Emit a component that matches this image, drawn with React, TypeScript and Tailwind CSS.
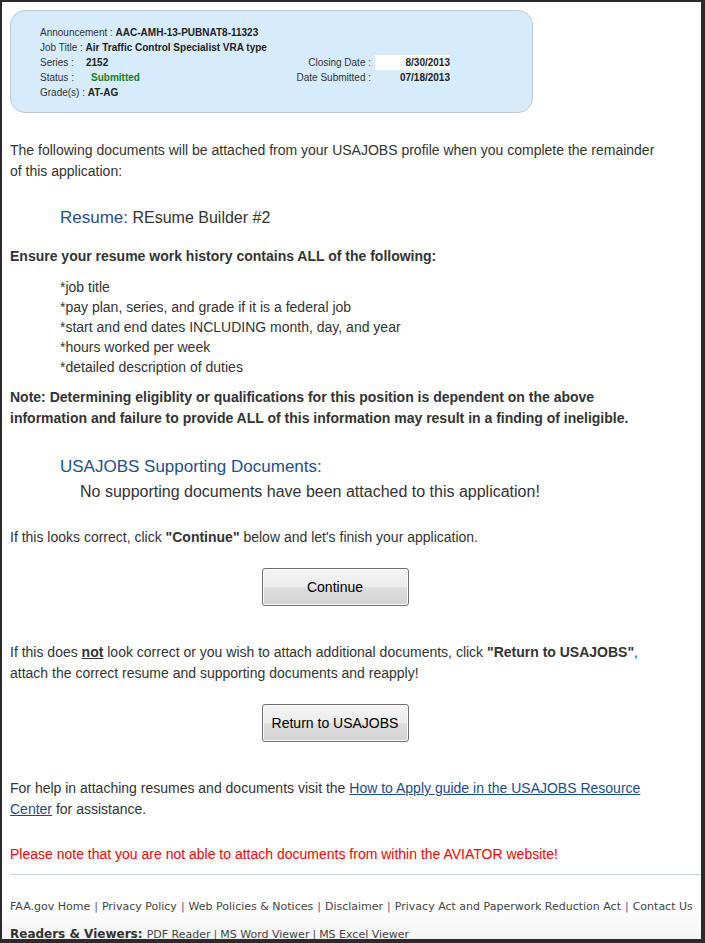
const INFO_LABEL = 'text-[#333333]';
const INFO_VALUE = 'font-bold text-[#222222]';

function InfoBox() {
  return (
    <div className="ml-2 mt-2 h-[103px] w-[523px] rounded-[15px] border border-[#bfc7cf] bg-[#d6ecfc] pl-[29px] pt-[14px] text-[10px] leading-[15px]">
      <div className="flex">
        <span className={INFO_LABEL}>Announcement :&nbsp;</span>
        <span className={INFO_VALUE}>AAC-AMH-13-PUBNAT8-11323</span>
      </div>
      <div className="flex">
        <span className={INFO_LABEL}>Job Title :&nbsp;</span>
        <span className={INFO_VALUE}>Air Traffic Control Specialist VRA type</span>
      </div>
      <div className="flex">
        <span className={`w-[46px] ${INFO_LABEL}`}>Series :</span>
        <span className={`w-[206px] ${INFO_VALUE}`}>2152</span>
        <span className={`w-[79px] text-right ${INFO_LABEL}`}>Closing Date :</span>
        <span className={`ml-1 w-[75px] bg-white text-right ${INFO_VALUE}`}>8/30/2013</span>
      </div>
      <div className="flex">
        <span className={`w-[51px] ${INFO_LABEL}`}>Status :</span>
        <span className="w-[201px] font-bold text-[#1e7a1e]">Submitted</span>
        <span className={`w-[79px] text-right ${INFO_LABEL}`}>Date Submitted :</span>
        <span className={`ml-1 w-[75px] text-right ${INFO_VALUE}`}>07/18/2013</span>
      </div>
      <div className="flex">
        <span className={INFO_LABEL}>Grade(s) :&nbsp;</span>
        <span className={INFO_VALUE}>AT-AG</span>
      </div>
    </div>
  );
}

function GrayButton({ label }: { label: string }) {
  return (
    <div className="flex justify-center">
      <button className="h-[38px] w-[147px] rounded-[3px] border border-[#707070] bg-[linear-gradient(to_bottom,#f4f4f4_0%,#ececec_48%,#dedede_52%,#d3d3d3_100%)] text-[14px] text-black shadow-[inset_0_0_0_1px_#fbfbfb]">
        {label}
      </button>
    </div>
  );
}

const FOOTER_LINKS = [
  'FAA.gov Home',
  'Privacy Policy',
  'Web Policies & Notices',
  'Disclaimer',
  'Privacy Act and Paperwork Reduction Act',
  'Contact Us',
];

const VIEWERS = ['PDF Reader', 'MS Word Viewer', 'MS Excel Viewer'];

function Footer() {
  return (
    <div className="mt-[24px] pl-2 text-[11px] leading-[16px] text-[#444444] [font-family:'DejaVu_Sans',Verdana,sans-serif]">
      <div className="whitespace-nowrap">
        {FOOTER_LINKS.map((link, i) => (
          <span key={link}>
            {i > 0 && <span className="px-[4px] text-[#6b4c7a]">|</span>}
            {link}
          </span>
        ))}
      </div>
      <div className="mt-[11px] whitespace-nowrap">
        <span className="text-[12px] font-bold text-[#333333]">Readers &amp; Viewers: </span>
        {VIEWERS.map((v, i) => (
          <span key={v}>
            {i > 0 && <span className="px-[3px] text-[#555555]">|</span>}
            {v}
          </span>
        ))}
      </div>
    </div>
  );
}

export default function App() {
  return (
    <div className="h-[943px] w-[705px] overflow-hidden border-b-4 border-l-2 border-r-4 border-t-2 border-[#2b2b2b] bg-[linear-gradient(to_bottom,#ffffff_0%,#ffffff_96%,#f4f4f4_100%)] [font-family:'Liberation_Sans',Arial,sans-serif]">
      <InfoBox />

      <div className="w-[658px] pl-2 text-[14px] text-[#333333]">
        <p className="mt-[27px] leading-[21px]">
          The following documents will be attached from your USAJOBS profile when you complete the remainder of this
          application:
        </p>

        <div className="mt-[24px] pl-[50px] leading-[24px]">
          <span className="text-[17px] text-[#1e4f8f]">Resume:</span>
          <span className="text-[16px] text-[#333333]"> REsume Builder #2</span>
        </div>

        <p className="mt-[16px] font-bold leading-[21px]">Ensure your resume work history contains ALL of the following:</p>

        <ul className="mt-[10px] pl-[50px] leading-[20px]">
          <li>*job title</li>
          <li>*pay plan, series, and grade if it is a federal job</li>
          <li>*start and end dates INCLUDING month, day, and year</li>
          <li>*hours worked per week</li>
          <li>*detailed description of duties</li>
        </ul>

        <p className="mt-[10px] font-bold leading-[21px]">
          Note: Determining eligiblity or qualifications for this position is dependent on the above information and
          failure to provide ALL of this information may result in a finding of ineligible.
        </p>

        <div className="mt-[26px] pl-[50px] text-[17px] leading-[24px] text-[#1e4f8f]">USAJOBS Supporting Documents:</div>
        <div className="mt-[2px] pl-[70px] text-[16px] leading-[22px]">No supporting documents have been attached to this application!</div>

        <p className="mt-[24px] leading-[21px]">
          If this looks correct, click <b>"Continue"</b> below and let's finish your application.
        </p>

        <div className="mt-[20px]">
          <GrayButton label="Continue" />
        </div>

        <p className="mt-[36px] leading-[21px]">
          If this does <b className="underline">not</b> look correct or you wish to attach additional documents, click{' '}
          <b>"Return to USAJOBS"</b>, attach the correct resume and supporting documents and reapply!
        </p>

        <div className="mt-[20px]">
          <GrayButton label="Return to USAJOBS" />
        </div>

        <p className="mt-[36px] leading-[21px]">
          For help in attaching resumes and documents visit the{' '}
          <a href="#" className="text-[#1a4c8e] underline">
            How to Apply guide in the USAJOBS Resource Center
          </a>{' '}
          for assistance.
        </p>

        <p className="mt-[24px] leading-[21px] text-[#ff0000]">
          Please note that you are not able to attach documents from within the AVIATOR website!
        </p>
      </div>

      <div className="ml-2 mt-[9px] h-px bg-[#c5d3e0]" />

      <Footer />
    </div>
  );
}
